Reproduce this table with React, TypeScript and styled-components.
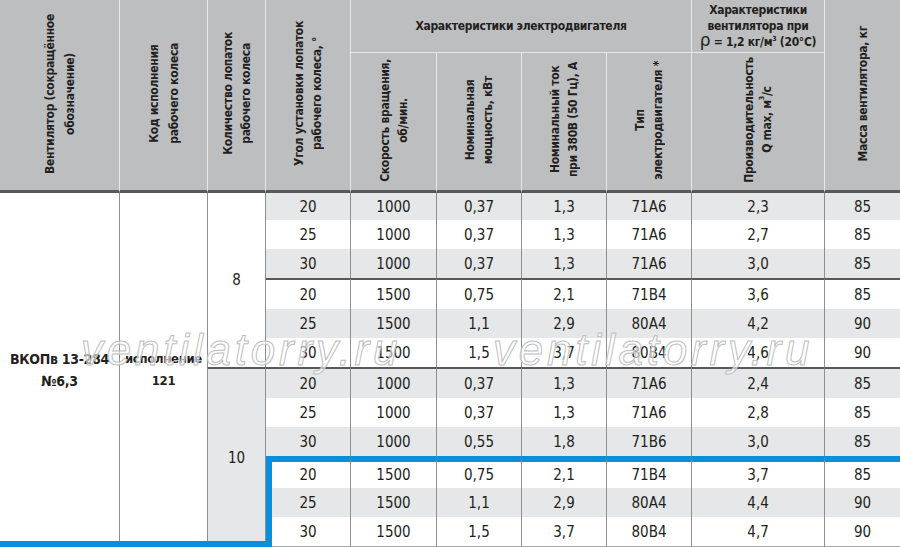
import styled, { createGlobalStyle } from "styled-components";

const GlobalStyle = createGlobalStyle`
  html, body {
    margin: 0;
    padding: 0;
    background: #fff;
  }
`;

const narrow = `"Liberation Sans Narrow", "Arial Narrow", "DejaVu Sans Condensed", "Liberation Sans", sans-serif`;

type RowData = [number, number, string, string, string, string, number];

interface Group {
  blades: number;
  rows: RowData[];
}

const groups: Group[] = [
  {
    blades: 8,
    rows: [
      [20, 1000, "0,37", "1,3", "71А6", "2,3", 85],
      [25, 1000, "0,37", "1,3", "71А6", "2,7", 85],
      [30, 1000, "0,37", "1,3", "71А6", "3,0", 85],
      [20, 1500, "0,75", "2,1", "71В4", "3,6", 85],
      [25, 1500, "1,1", "2,9", "80А4", "4,2", 90],
      [30, 1500, "1,5", "3,7", "80В4", "4,6", 90],
    ],
  },
  {
    blades: 10,
    rows: [
      [20, 1000, "0,37", "1,3", "71А6", "2,4", 85],
      [25, 1000, "0,37", "1,3", "71А6", "2,8", 85],
      [30, 1000, "0,55", "1,8", "71В6", "3,0", 85],
      [20, 1500, "0,75", "2,1", "71В4", "3,7", 85],
      [25, 1500, "1,1", "2,9", "80А4", "4,4", 90],
      [30, 1500, "1,5", "3,7", "80В4", "4,7", 90],
    ],
  },
];

const colWidths = [120, 88, 58, 85, 86, 85, 85, 85, 133, 75];

// the highlighted block (10 blades, 1500 rpm) starts at this row
const HIGHLIGHT_ROW = 9;

type Edge = "none" | "sep" | "blue";

const rowHeight = (index: number, last: boolean) => {
  if (index === 0) return 27;
  if (index === HIGHLIGHT_ROW) return 32;
  if (index === 3 || index === 6) return 31;
  if (last) return 30;
  return 29;
};

export default function App() {
  const totalRows = groups.reduce((n, g) => n + g.rows.length, 0);

  return (
    <>
      <GlobalStyle />
      <Page>
        <Table>
          <colgroup>
            {colWidths.map((w, i) => (
              <Col key={i} $w={w} />
            ))}
          </colgroup>
          <thead>
            <TopHeadRow>
              <HeadCell rowSpan={2}>
                <VerticalLabel $lh={20}>
                  Вентилятор (сокращённое
                  <br />
                  обозначение)
                </VerticalLabel>
              </HeadCell>
              <HeadCell rowSpan={2}>
                <VerticalLabel $lh={20}>
                  Код исполнения
                  <br />
                  рабочего колеса
                </VerticalLabel>
              </HeadCell>
              <HeadCell rowSpan={2}>
                <VerticalLabel>
                  Количество лопаток
                  <br />
                  рабочего колеса
                </VerticalLabel>
              </HeadCell>
              <HeadCell rowSpan={2}>
                <VerticalLabel>
                  Угол установки лопаток
                  <br />
                  рабочего колеса, °
                </VerticalLabel>
              </HeadCell>
              <GroupHead colSpan={4}>Характеристики электродвигателя</GroupHead>
              <GroupHead>
                Характеристики
                <br />
                вентилятора при
                <br />
                <Rho>ρ</Rho> = 1,2 кг/м<sup>3</sup> (20°С)
              </GroupHead>
              <HeadCell rowSpan={2} $last>
                <VerticalLabel>Масса вентилятора, кг</VerticalLabel>
              </HeadCell>
            </TopHeadRow>
            <SubHeadRow>
              <HeadCell>
                <VerticalLabel>
                  Скорость вращения,
                  <br />
                  об/мин.
                </VerticalLabel>
              </HeadCell>
              <HeadCell>
                <VerticalLabel>
                  Номинальная
                  <br />
                  мощность, кВт
                </VerticalLabel>
              </HeadCell>
              <HeadCell>
                <VerticalLabel>
                  Номинальный ток
                  <br />
                  при 380В (50 Гц), А
                </VerticalLabel>
              </HeadCell>
              <HeadCell>
                <VerticalLabel>
                  Тип
                  <br />
                  электродвигателя *
                </VerticalLabel>
              </HeadCell>
              <HeadCell>
                <VerticalLabel>
                  Производительность
                  <br />
                  Q max, м<sup>3</sup>/с
                </VerticalLabel>
              </HeadCell>
            </SubHeadRow>
          </thead>
          <tbody>
            {groups.map((group, gi) =>
              group.rows.map((row, ri) => {
                const index = gi * group.rows.length + ri;
                const last = index === totalRows - 1;
                let edge: Edge = "none";
                if (index === HIGHLIGHT_ROW) edge = "blue";
                else if (ri === 3 || (gi > 0 && ri === 0)) edge = "sep";
                return (
                  <BodyRow key={index} $shade={index % 2 === 0} $h={rowHeight(index, last)}>
                    {index === 0 && (
                      <>
                        <SpanCell rowSpan={totalRows} $bold>
                          ВКОПв 13-284
                          <br />
                          №6,3
                        </SpanCell>
                        <SpanCell rowSpan={totalRows} $bold $small>
                          исполнение
                          <br />
                          121
                        </SpanCell>
                      </>
                    )}
                    {ri === 0 && (
                      <SpanCell rowSpan={group.rows.length} $shade={gi === 1} $sep={gi > 0}>
                        {group.blades}
                      </SpanCell>
                    )}
                    {row.map((value, ci) => (
                      <Cell key={ci} $edge={edge} $last={ci === row.length - 1} $bottom={last}>
                        {value}
                      </Cell>
                    ))}
                  </BodyRow>
                );
              })
            )}
          </tbody>
        </Table>

        <Watermark $left={81}>ventilatorry.ru</Watermark>
        <Watermark $left={493}>ventilatorry.ru</Watermark>

        <HighlightCorner />
      </Page>
    </>
  );
}

const Page = styled.div`
  position: relative;
  width: 900px;
  height: 547px;
  overflow: hidden;
  background: #fff;
  font-family: ${narrow};
  color: #231f20;
`;

const Table = styled.table`
  width: 900px;
  table-layout: fixed;
  border-collapse: separate;
  border-spacing: 0;
`;

const Col = styled.col<{ $w: number }>`
  width: ${(p) => p.$w}px;
`;

const TopHeadRow = styled.tr`
  height: 53px;
`;

const SubHeadRow = styled.tr`
  height: 140px;
`;

const HeadCell = styled.th<{ $last?: boolean }>`
  padding: 0;
  background: #bcbec0;
  border-right: ${(p) => (p.$last ? "none" : "1px solid #e8e8e9")};
  border-bottom: 3px solid #58595b;
  text-align: center;
  vertical-align: middle;
  font-size: 12px;
  font-weight: 700;
  letter-spacing: -0.3px;
  color: #231f20;
  overflow: hidden;
`;

const GroupHead = styled.th`
  padding: 0;
  background: #bcbec0;
  border-right: 1px solid #e8e8e9;
  border-bottom: 1px solid #e8e8e9;
  text-align: center;
  vertical-align: middle;
  white-space: nowrap;
  font-size: 12px;
  font-weight: 700;
  letter-spacing: -0.3px;
  line-height: 16px;
  color: #231f20;

  sup {
    font-size: 7px;
    line-height: 0;
  }
`;

const VerticalLabel = styled.div<{ $lh?: number }>`
  display: inline-block;
  writing-mode: vertical-rl;
  transform: rotate(180deg);
  white-space: nowrap;
  text-align: center;
  line-height: ${(p) => p.$lh ?? 18}px;

  sup {
    font-size: 7px;
    line-height: 0;
  }
`;

const Rho = styled.span`
  font-size: 17px;
  font-weight: 400;
  line-height: 0;
  font-family: "DejaVu Sans", sans-serif;
`;

const BodyRow = styled.tr<{ $shade: boolean; $h: number }>`
  height: ${(p) => p.$h}px;
  background: ${(p) => (p.$shade ? "#e6e7e8" : "#fff")};
`;

const Cell = styled.td<{ $edge: Edge; $last?: boolean; $bottom?: boolean }>`
  padding: 0;
  text-align: center;
  vertical-align: middle;
  font-size: 15px;
  border-right: ${(p) => (p.$last ? "none" : "1px solid #8d8e90")};
  border-top: ${(p) =>
    p.$edge === "blue" ? "6px solid #0a8fdf" : p.$edge === "sep" ? "2px solid #58595b" : "none"};
  border-bottom: ${(p) => (p.$bottom ? "1px solid #a7a9ab" : "none")};
`;

const SpanCell = styled.td<{ $bold?: boolean; $small?: boolean; $shade?: boolean; $sep?: boolean }>`
  padding: 0;
  text-align: center;
  vertical-align: middle;
  background: ${(p) => (p.$shade ? "#e6e7e8" : "#fff")};
  border-right: 1px solid #8d8e90;
  border-top: ${(p) => (p.$sep ? "2px solid #58595b" : "none")};
  font-size: ${(p) => (p.$small ? 13 : p.$bold ? 14 : 15)}px;
  font-weight: ${(p) => (p.$bold ? 700 : 400)};
  letter-spacing: ${(p) => (p.$bold ? "-0.3px" : "0")};
  line-height: 22px;
`;

const Watermark = styled.div<{ $left: number }>`
  position: absolute;
  left: ${(p) => p.$left}px;
  top: 328px;
  font-family: "Liberation Sans", sans-serif;
  font-style: italic;
  font-size: 44px;
  line-height: 44px;
  letter-spacing: 3.8px;
  font-weight: 400;
  color: rgba(255, 255, 255, 0.6);
  -webkit-text-stroke: 1px #bdbec0;
  pointer-events: none;
  white-space: nowrap;
`;

// blue outline around the highlighted block: its left side and the base below the first columns
const HighlightCorner = styled.div`
  position: absolute;
  left: 0;
  top: 456px;
  width: 272px;
  bottom: 0;
  box-sizing: border-box;
  border-right: 6px solid #0a8fdf;
  border-bottom: 6px solid #0a8fdf;
  pointer-events: none;
`;
